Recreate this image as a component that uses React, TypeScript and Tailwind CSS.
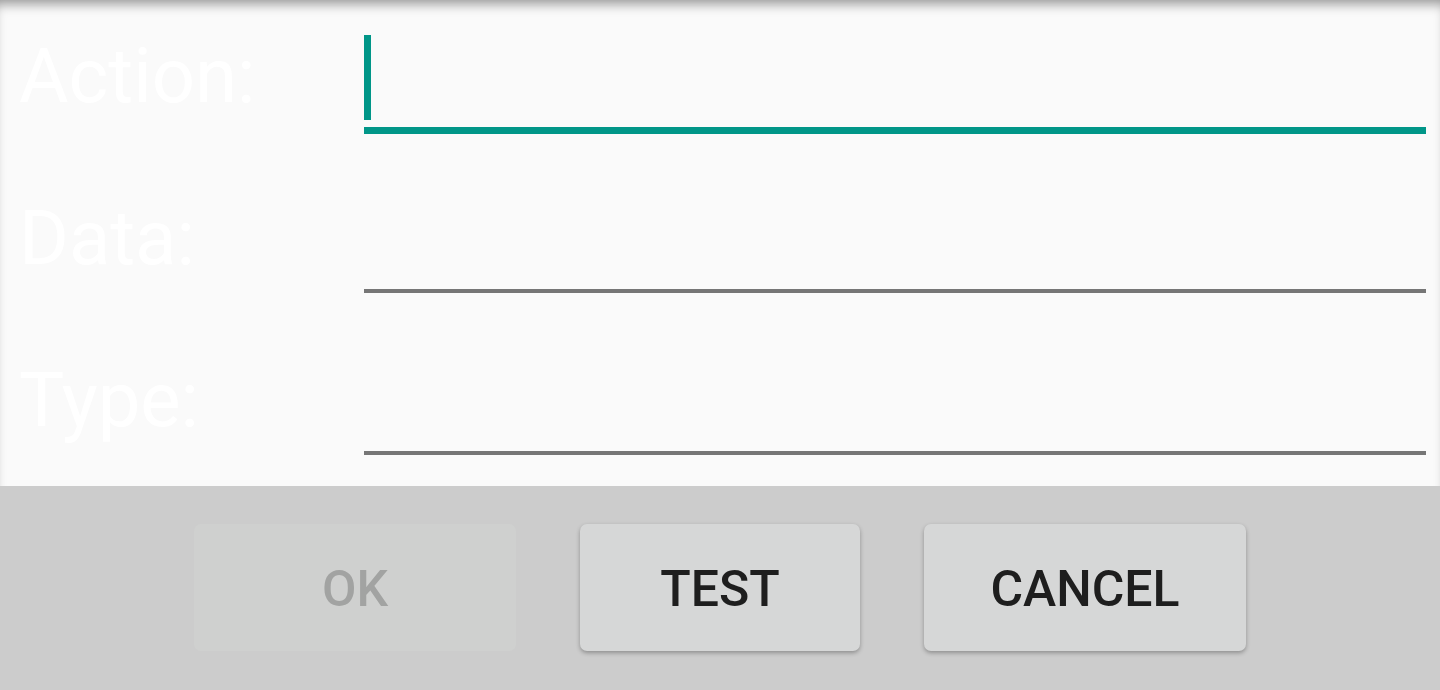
import React from 'react'

const rows = [
  { label: 'Action:', focused: true },
  { label: 'Data:', focused: false },
  { label: 'Type:', focused: false },
]

function FieldRow({ label, focused }: { label: string; focused: boolean }) {
  return (
    <div className="flex h-[162px]">
      {/* label column */}
      <div className="w-[364px] shrink-0 pl-[19px] pt-[38px] text-[76px] leading-[76px] text-white">
        {label}
      </div>
      {/* input column */}
      <div className="flex flex-1 flex-col pt-[35px] mr-[14px]">
        <div className="h-[85px]">
          {focused && <div className="h-full w-[7px] bg-[#009688]" />}
        </div>
        {focused ? (
          <div className="mt-[7px] h-[7px] bg-[#009688]" />
        ) : (
          <div className="mt-[7px] h-[4px] bg-[#767676]" />
        )}
      </div>
    </div>
  )
}

function DialogButton({
  label,
  width,
  disabled,
}: {
  label: string
  width: string
  disabled?: boolean
}) {
  return (
    <button
      className={
        disabled
          ? `${width} flex h-[127px] items-center justify-center rounded-[7px] bg-[#cfd0cf] pt-[3px] text-[50px] font-medium text-[#a2a3a2]`
          : `${width} flex h-[127px] items-center justify-center rounded-[7px] bg-[#d6d7d7] pt-[3px] text-[50px] font-medium text-[#1e1e1e] shadow-[0_2px_4px_rgba(0,0,0,0.3)]`
      }
    >
      {label}
    </button>
  )
}

export default function App() {
  return (
    <div
      className="flex h-[690px] w-[1440px] flex-col overflow-hidden"
      style={{ fontFamily: 'Roboto, "Liberation Sans", sans-serif' }}
    >
      {/* Form */}
      <div className="h-[486px] shrink-0 bg-[#fafafa] shadow-[inset_0_10px_12px_-6px_rgba(0,0,0,0.4)]">
        {rows.map((r) => (
          <FieldRow key={r.label} label={r.label} focused={r.focused} />
        ))}
      </div>

      {/* Button bar */}
      <div className="flex flex-1 justify-center gap-16 bg-[#cccccc] pt-[38px]">
        <DialogButton label="OK" width="w-[322px]" disabled />
        <DialogButton label="TEST" width="w-[280px]" />
        <DialogButton label="CANCEL" width="w-[322px]" />
      </div>
    </div>
  )
}
